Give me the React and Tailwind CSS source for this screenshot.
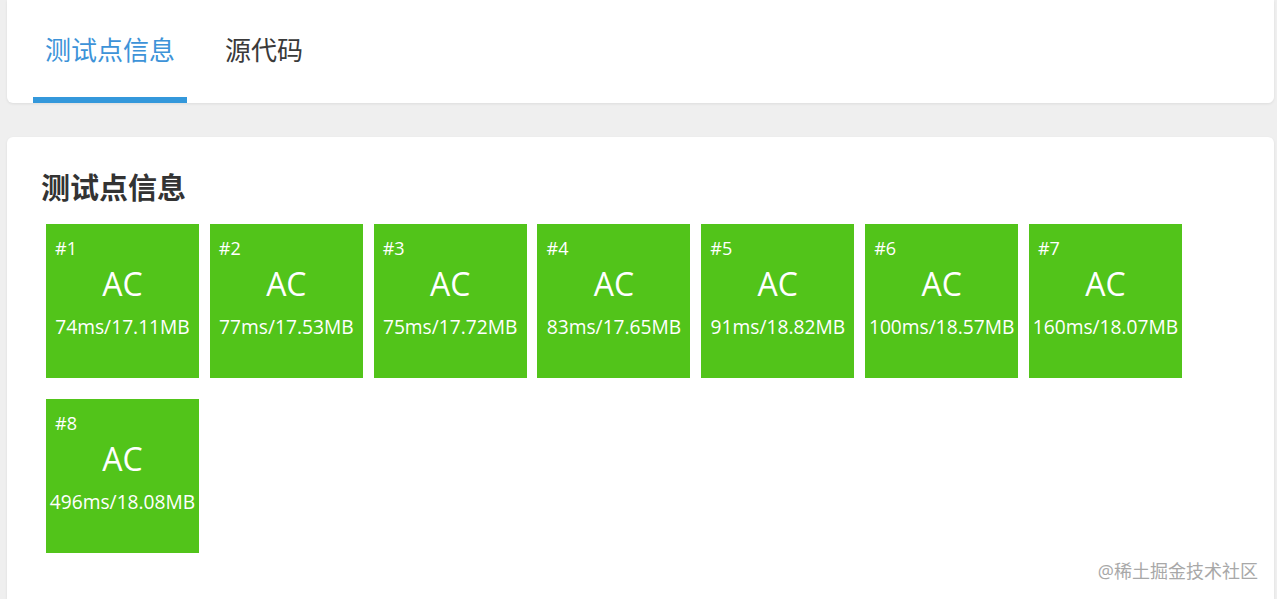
import React from 'react';

const FONT = { fontFamily: '"Open Sans", "Noto Sans CJK SC", sans-serif' };

const cases = [
  { id: 1, time: '74ms', mem: '17.11MB' },
  { id: 2, time: '77ms', mem: '17.53MB' },
  { id: 3, time: '75ms', mem: '17.72MB' },
  { id: 4, time: '83ms', mem: '17.65MB' },
  { id: 5, time: '91ms', mem: '18.82MB' },
  { id: 6, time: '100ms', mem: '18.57MB' },
  { id: 7, time: '160ms', mem: '18.07MB' },
  { id: 8, time: '496ms', mem: '18.08MB' },
];

function CaseBox({ id, time, mem }) {
  return (
    <div className="w-[153px] h-[154px] bg-[#52c41a] text-white flex flex-col pt-[14px]">
      <div className="text-[18px] leading-[20px] pl-[9px]">#{id}</div>
      <div className="text-[32px] leading-[40px] text-center mt-[6px]">AC</div>
      <div className="text-[19.2px] leading-[24px] text-center mt-[11px] whitespace-nowrap">
        {time}/{mem}
      </div>
    </div>
  );
}

export default function App() {
  return (
    <div className="h-[599px] overflow-hidden bg-[#efefef] flex flex-col" style={FONT}>
      {/* tabs card */}
      <div className="ml-[7px] mr-[3px] bg-white rounded-b-[6px] shadow-[0_1px_3px_rgba(0,0,0,0.08)] flex px-[26px] gap-[26px] h-[103px]">
        <div className="px-3 flex items-center pt-[3px] border-b-[6px] border-[#3498db] text-[26px] text-[#3d93d8]">
          测试点信息
        </div>
        <div className="px-3 flex items-center pt-[3px] border-b-[6px] border-transparent text-[26px] text-[#3a3a3a]">
          源代码
        </div>
      </div>

      {/* result card */}
      <div className="relative flex-1 mt-[34px] ml-[7px] mr-[3px] bg-white rounded-t-[6px] shadow-[0_1px_3px_rgba(0,0,0,0.08)] pl-[34px] pr-[34px] pt-[33px]">
        <h2 className="text-[29px] leading-[36px] font-bold text-[#333]">测试点信息</h2>
        <div className="flex flex-wrap gap-x-[10.83px] gap-y-[21px] ml-[5px] mt-[18px]">
          {cases.map((c) => (
            <CaseBox key={c.id} {...c} />
          ))}
        </div>
        <div className="absolute right-[16px] bottom-[16px] text-[18px] leading-[24px] text-[#a8a8a8]">
          @稀土掘金技术社区
        </div>
      </div>
    </div>
  );
}
